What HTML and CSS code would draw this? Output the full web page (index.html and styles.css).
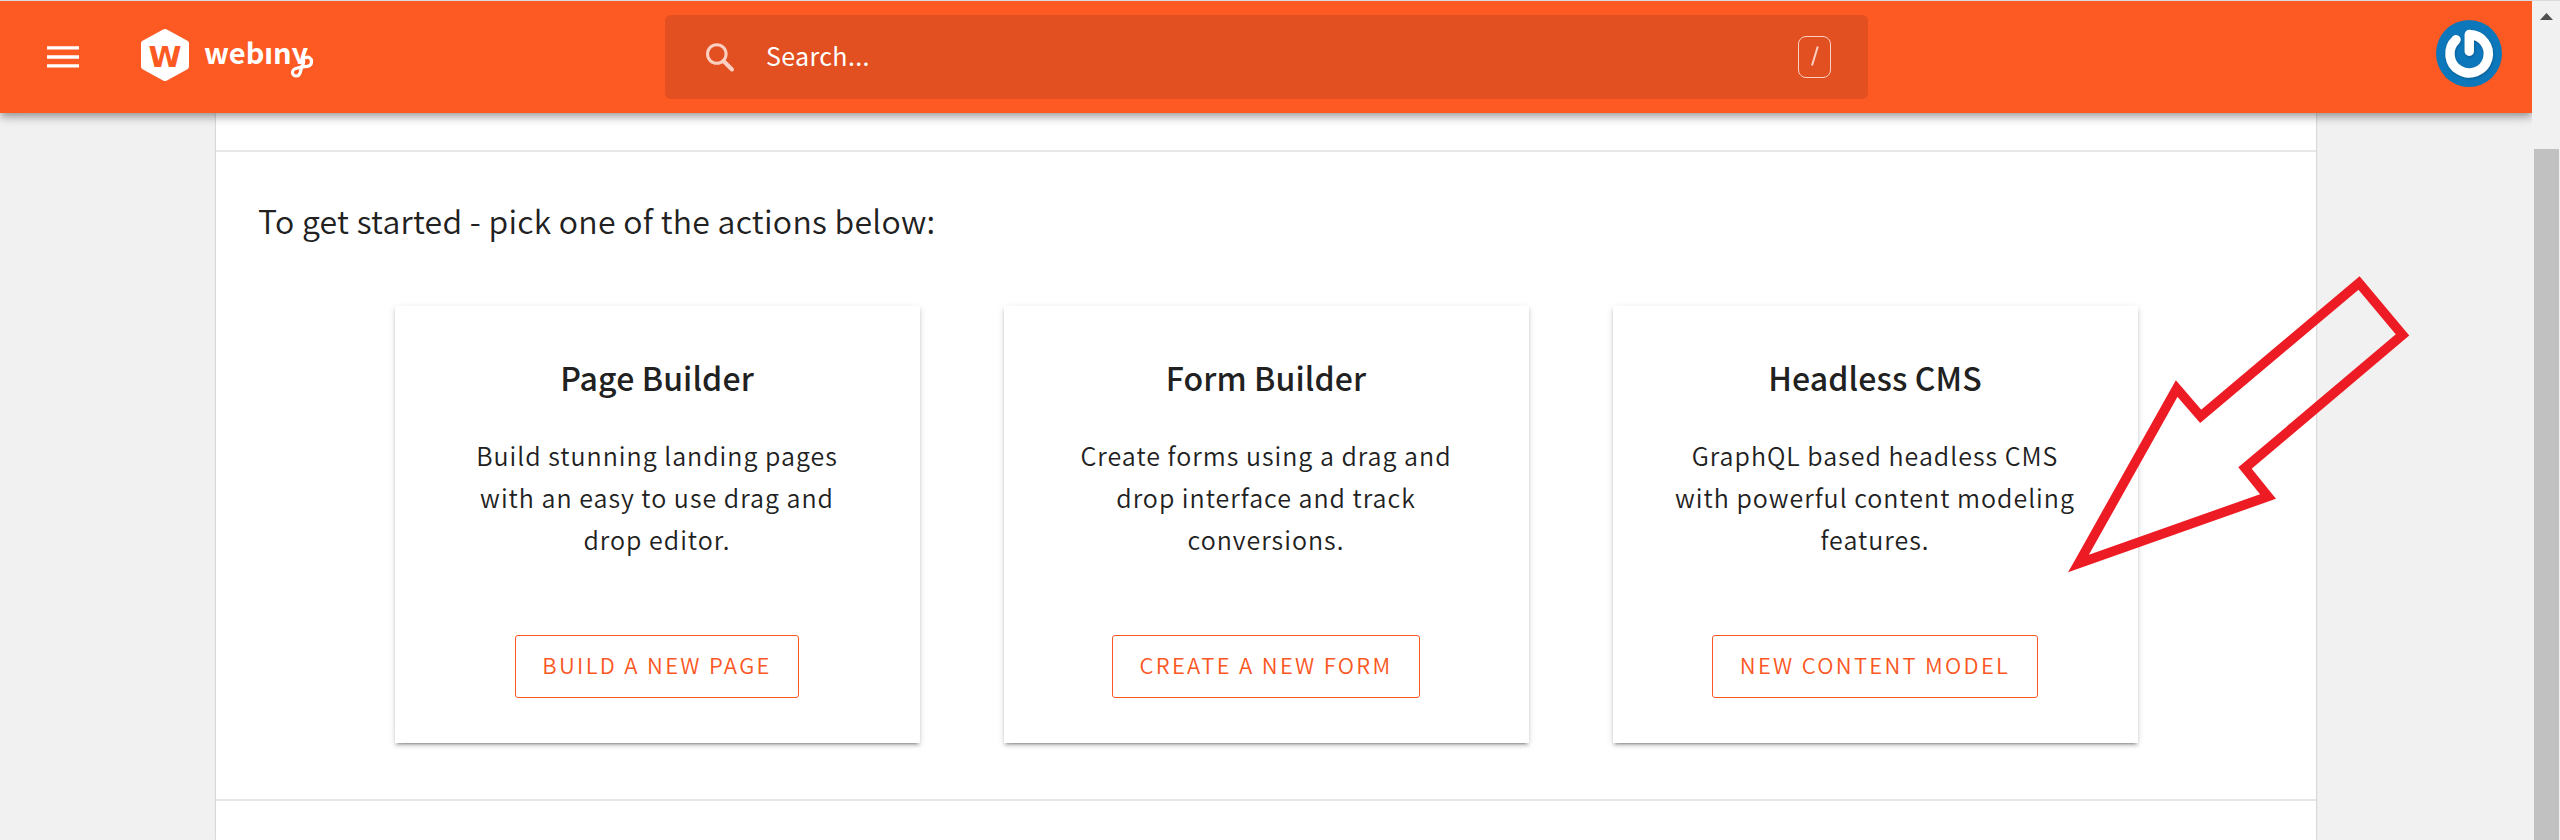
FILE: index.html
```html
<!DOCTYPE html>
<html lang="en">
<head>
<meta charset="utf-8">
<title>Webiny</title>
<link rel="stylesheet" href="styles.css">
</head>
<body>
<div class="window">
  <div class="page">
    <header class="topbar">
      <div class="brand">
        <svg class="menu" width="32" height="22" viewBox="0 0 32 22"><path d="M0 1.8h32M0 11h32M0 19.8h32" stroke="#fff" stroke-width="3.3"/></svg>
        <svg class="mark" width="48" height="52" viewBox="0 0 48 52">
          <path d="M24 3 45 14.5V37.5L24 49 3 37.5V14.5Z" fill="#fff" stroke="#fff" stroke-width="6" stroke-linejoin="round"/>
          <text class="mark-letter" x="24" y="38" text-anchor="middle" textLength="33" lengthAdjust="spacingAndGlyphs">W</text>
        </svg>
        <div class="wordmark"><span class="wordmark-text">webıny</span>
          <svg class="curl" width="26" height="26" viewBox="0 0 26 26"><path d="M14.5 2V11.500C14.500 15.500 12 16.500 8.500 17C2 18 2 25 7.500 25C13 25 10.500 17 14 15.500C18 16 22.500 15.500 22.500 10.500C22.500 7 19.500 5.500 17 6.500" fill="none" stroke="#fff" stroke-width="3.2" stroke-linecap="round"/></svg>
        </div>
      </div>
      <div class="search">
        <svg width="28" height="29" viewBox="0 0 28 29" fill="none" stroke="#fbd0c3"><circle cx="10.800" cy="11" r="9.300" stroke-width="3"/><path d="M17.500 18 26 26.500" stroke-width="4" stroke-linecap="round"/></svg>
        <span class="search-text">Search...</span>
        <span class="key"><svg width="8" height="20" viewBox="0 0 8 20"><path d="M6.800.5 1 19.500" stroke="#fbd0c3" stroke-width="2"/></svg></span>
      </div>
      <svg class="avatar" width="66" height="67" viewBox="0 0 66 67">
        <defs><filter id="soft" x="-20%" y="-20%" width="140%" height="140%"><feDropShadow dx="0.500" dy="1" stdDeviation="1" flood-color="#04406c" flood-opacity=".6"/></filter></defs>
        <ellipse cx="33" cy="33.500" rx="33" ry="33.500" fill="#0c77ba"/>
        <path d="M33.300 31.200V14.500A19.200 19.200 0 1 1 20 19.700" fill="none" stroke="#fff" stroke-width="9.400" stroke-linecap="round" stroke-linejoin="round" filter="url(#soft)"/>
      </svg>
    </header>
    <main class="panel">
      <div class="panel-top"></div>
      <section class="start">
        <h1 class="lead">To get started - pick one of the actions below:</h1>
        <div class="cards">
          <article class="card">
            <h2 class="title">Page Builder</h2>
            <p class="copy">Build stunning landing pages<br>with an easy to use drag and<br>drop editor.</p>
            <a class="button">BUILD A NEW PAGE</a>
          </article>
          <article class="card">
            <h2 class="title">Form Builder</h2>
            <p class="copy">Create forms using a drag and<br>drop interface and track<br>conversions.</p>
            <a class="button">CREATE A NEW FORM</a>
          </article>
          <article class="card">
            <h2 class="title">Headless CMS</h2>
            <p class="copy">GraphQL based headless CMS<br>with powerful content modeling<br>features.</p>
            <a class="button">NEW CONTENT MODEL</a>
          </article>
        </div>
      </section>
    </main>
  </div>
  <div class="scrollbar">
    <svg width="13" height="7" viewBox="0 0 13 7"><path d="M0 7 6.500 0 13 7Z" fill="#505050"/></svg>
    <div class="thumb"></div>
  </div>
  <svg class="arrow" width="400" height="330" viewBox="0 0 400 330"><path d="M38.500 303.500 136.700 128.500 160.700 156.300 319 23 362.500 75 205 208 228 236.500Z" fill="none" stroke="#ed1c24" stroke-width="9.600" stroke-miterlimit="10"/></svg>
</div>
</body>
</html>
```

FILE: styles.css
```css
* { box-sizing: border-box; }

body {
  margin: 0;
  font-family: "Noto Sans CJK SC", "Noto Sans", sans-serif;
  color: #212121;
}

.window {
  position: relative;
  display: flex;
  width: 2560px;
  height: 840px;
  border-top: 1px solid #dadce0;
  overflow: hidden;
}

.page {
  flex: 1;
  display: flex;
  flex-direction: column;
  overflow: hidden;
  background: #f1f1f1;
}

.topbar {
  position: relative;
  z-index: 1;
  flex: none;
  display: flex;
  align-items: flex-start;
  height: 112px;
  padding-right: 30px;
  background: #fd5a23;
  box-shadow: 0 3px 6px -1.5px rgba(0, 0, 0, .2), 0 6px 7.5px rgba(0, 0, 0, .14), 0 1.5px 15px rgba(0, 0, 0, .12);
}

.brand {
  display: flex;
  width: 665px;
  padding-left: 47px;
}

.menu { margin-top: 45px; }

.mark { margin: 28px 0 0 62px; }

.mark-letter {
  font: bold 29px "DejaVu Sans", sans-serif;
  fill: #fd5a23;
}

.wordmark {
  position: relative;
  height: 42px;
  margin: 29px 0 0 15px;
  color: #fff;
  font-size: 29px;
  font-weight: 700;
  line-height: 42px;
}

.wordmark-text {
  display: block;
  clip-path: inset(0 0 8px 0);
}

.curl {
  position: absolute;
  left: 85px;
  top: 21px;
  overflow: visible;
}

.search {
  display: flex;
  align-items: center;
  width: 1203px;
  height: 84px;
  margin-top: 14px;
  padding: 0 37px 0 41px;
  border-radius: 6px;
  background: #e24f20;
}

.search-text {
  flex: 1;
  margin-left: 32px;
  padding-bottom: 4px;
  color: #fff;
  font-size: 25px;
  letter-spacing: .35px;
}

.key {
  display: flex;
  align-items: center;
  justify-content: center;
  width: 33px;
  height: 42px;
  padding-bottom: 3px;
  border: 1px solid #fbd0c3;
  border-radius: 8px;
}

.avatar { margin: 19px 0 0 auto; }

.panel {
  flex: 1;
  width: 2100px;
  margin-left: 216px;
  background: #fff;
  box-shadow: 0 0 2px rgba(0, 0, 0, .3);
}

.panel-top { height: 37px; }

.start {
  height: 651px;
  padding: 45px 42px 0;
  border-top: 2px solid #e7e7e7;
  border-bottom: 2px solid #e7e7e7;
}

.lead {
  margin: 0 0 63px;
  font-size: 32px;
  font-weight: 350;
  line-height: 46px;
  letter-spacing: .28px;
}

.cards {
  display: flex;
  justify-content: center;
  gap: 84px;
}

.card {
  display: flex;
  flex-direction: column;
  align-items: center;
  width: 525px;
  height: 437px;
  padding-top: 48px;
  background: #fff;
  text-align: center;
  box-shadow: 0 4.5px 1.5px -3px rgba(0, 0, 0, .2), 0 3px 3px rgba(0, 0, 0, .14), 0 1.5px 7.5px rgba(0, 0, 0, .12);
}

.title {
  margin: 0 0 34px;
  font-size: 32px;
  font-weight: 500;
  line-height: 46px;
  letter-spacing: .12px;
}

.copy {
  margin: 0 0 75px;
  font-size: 25px;
  font-weight: 350;
  line-height: 42px;
  letter-spacing: 1px;
}

.button {
  height: 63px;
  padding: 0 26.5px;
  border: 1px solid #fa5723;
  border-radius: 3px;
  color: #fa5723;
  font-size: 22px;
  font-weight: 350;
  line-height: 57px;
  letter-spacing: 2.3px;
}

.scrollbar {
  display: flex;
  flex-direction: column;
  align-items: center;
  width: 28px;
  padding-top: 12px;
  background: #f1f1f1;
}

.thumb {
  flex: 1;
  width: 25px;
  margin-top: 129px;
  background: #c1c1c1;
}

.arrow {
  position: absolute;
  left: 2040px;
  top: 259px;
}
```
